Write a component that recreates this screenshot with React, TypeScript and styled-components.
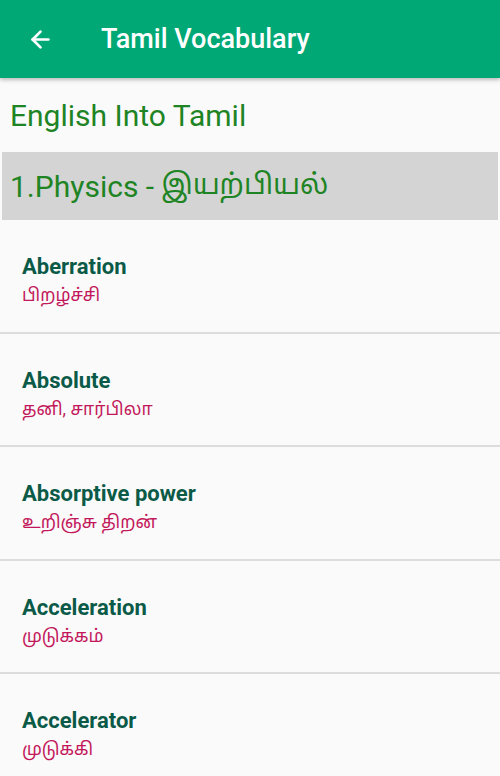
import React from "react";
import styled, { createGlobalStyle } from "styled-components";
import { ArrowLeft } from "lucide-react";

const GlobalStyle = createGlobalStyle`
  html, body {
    margin: 0;
    padding: 0;
    background: #fafafa;
  }
  body {
    font-family: Roboto, "Noto Sans", "Noto Sans Tamil", sans-serif;
  }
`;

const Page = styled.div`
  width: 500px;
  height: 776px;
  overflow: hidden;
  background: #fafafa;
`;

const AppBar = styled.header`
  height: 78px;
  background-color: #00a876;
  display: flex;
  align-items: center;
  box-shadow: 0 2px 4px rgba(0, 0, 0, 0.25);
  position: relative;
  z-index: 1;
`;

const BackButton = styled.button`
  width: 78px;
  height: 78px;
  border: none;
  background: none;
  padding: 0 0 0 2px;
  display: flex;
  align-items: center;
  justify-content: center;
  color: #ffffff;
`;

const Title = styled.h1`
  margin: 0 0 0 23px;
  font-size: 27px;
  font-weight: 500;
  color: #ffffff;
`;

const SectionTitle = styled.h2`
  margin: 0;
  padding: 0 10px;
  height: 74px;
  display: flex;
  align-items: center;
  font-size: 30px;
  font-weight: 400;
  color: #1e8424;
`;

const CategoryBand = styled.div`
  margin: 0 2px;
  height: 68px;
  background-color: #d4d4d4;
  display: flex;
  align-items: center;
  padding-left: 8px;
  font-size: 30px;
  color: #1e8424;
`;

const TamilPart = styled.span`
  font-size: 28px;
  margin-left: 0.25em;
`;

const List = styled.ul`
  list-style: none;
  margin: 0;
  padding: 0;
`;

const Row = styled.li`
  height: 113.5px;
  box-sizing: border-box;
  padding: 34px 22px 0;
  border-bottom: 2px solid #dcdcdc;
`;

const Word = styled.div`
  font-size: 22px;
  line-height: 26px;
  font-weight: 700;
  color: #0b5a48;
`;

const Meaning = styled.div`
  font-size: 17.5px;
  line-height: 30px;
  color: #c2185b;
`;

const words = [
  { en: "Aberration", ta: "பிறழ்ச்சி" },
  { en: "Absolute", ta: "தனி, சார்பிலா" },
  { en: "Absorptive power", ta: "உறிஞ்சு திறன்" },
  { en: "Acceleration", ta: "முடுக்கம்" },
  { en: "Accelerator", ta: "முடுக்கி" },
];

const App = () => {
  return (
    <Page>
      <GlobalStyle />
      <AppBar>
        <BackButton aria-label="Back">
          <ArrowLeft size={27} strokeWidth={2.4} />
        </BackButton>
        <Title>Tamil Vocabulary</Title>
      </AppBar>
      <SectionTitle>English Into Tamil</SectionTitle>
      <CategoryBand>
        1.Physics -<TamilPart>இயற்பியல்</TamilPart>
      </CategoryBand>
      <List>
        {words.map((w) => (
          <Row key={w.en}>
            <Word>{w.en}</Word>
            <Meaning>{w.ta}</Meaning>
          </Row>
        ))}
      </List>
    </Page>
  );
};

export default App;
